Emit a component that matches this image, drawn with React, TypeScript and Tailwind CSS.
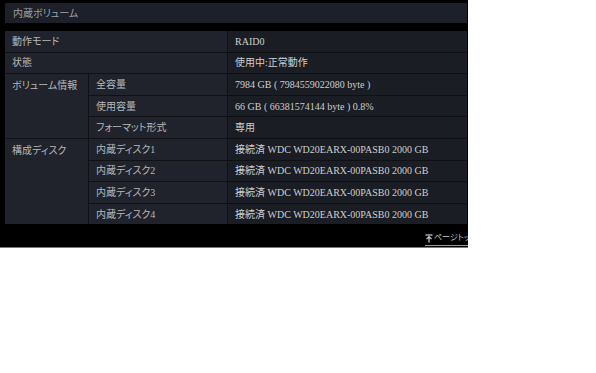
import React from "react";

const font = "[font-family:'Liberation_Serif','Noto_Sans_CJK_JP',serif] [font-feature-settings:'palt']";

const label = "bg-[#20232b] text-[#b8b8b8] px-[7px] flex items-center";
const value = "bg-[#1a1d24] text-[#cfcfcf] px-[7px] flex items-center whitespace-nowrap";

const disks = [1, 2, 3, 4];

export default function App() {
  return (
    <div className={`w-[596px] h-[373px] bg-white ${font} text-[10px]`}>
      <div className="w-[468px] h-[248px] bg-black overflow-hidden flex flex-col border-b border-[#7a7a7a]">
        <div className="mt-[3px] mx-[5px] mr-[1px] h-[20px] bg-[#1d2029] flex items-center pl-[8px] text-[#9ba0a8]">
          内蔵ボリューム
        </div>
        <div className="mt-[8px] mx-[5px] mr-[1px] grid grid-cols-[83px_138px_1fr] auto-rows-[20.6px] gap-px bg-[#0f1115]">
          <div className={`${label} col-span-2`}>動作モード</div>
          <div className={value}>RAID0</div>
          <div className={`${label} col-span-2`}>状態</div>
          <div className={value}>使用中:正常動作</div>

          <div className={`${label} row-span-3 !items-start pt-[4px]`}>ボリューム情報</div>
          <div className={label}>全容量</div>
          <div className={value}>7984 GB ( 7984559022080 byte )</div>
          <div className={label}>使用容量</div>
          <div className={value}>66 GB ( 66381574144 byte ) 0.8%</div>
          <div className={label}>フォーマット形式</div>
          <div className={value}>専用</div>

          <div className={`${label} row-span-4 !items-start pt-[4px]`}>構成ディスク</div>
          {disks.map((d) => (
            <React.Fragment key={d}>
              <div className={label}>内蔵ディスク{d}</div>
              <div className={value}>接続済 WDC WD20EARX-00PASB0 2000 GB</div>
            </React.Fragment>
          ))}
        </div>
        <div className="mt-[8px] pl-[425px] whitespace-nowrap flex">
          <div className="flex items-center gap-[1px] border-b border-[#9a9a9a] pb-[1px] text-[#c8c8c8] text-[8px]">
            <svg width="8" height="9" viewBox="0 0 8 9" className="shrink-0">
              <path d="M0.5 1H7.5" stroke="#d0d0d0" strokeWidth="1.2" />
              <path d="M4 8.5V3M1.5 5.2L4 2.6L6.5 5.2" stroke="#d0d0d0" strokeWidth="1.2" fill="none" />
            </svg>
            <span>ページトップ</span>
          </div>
        </div>
      </div>
    </div>
  );
}
